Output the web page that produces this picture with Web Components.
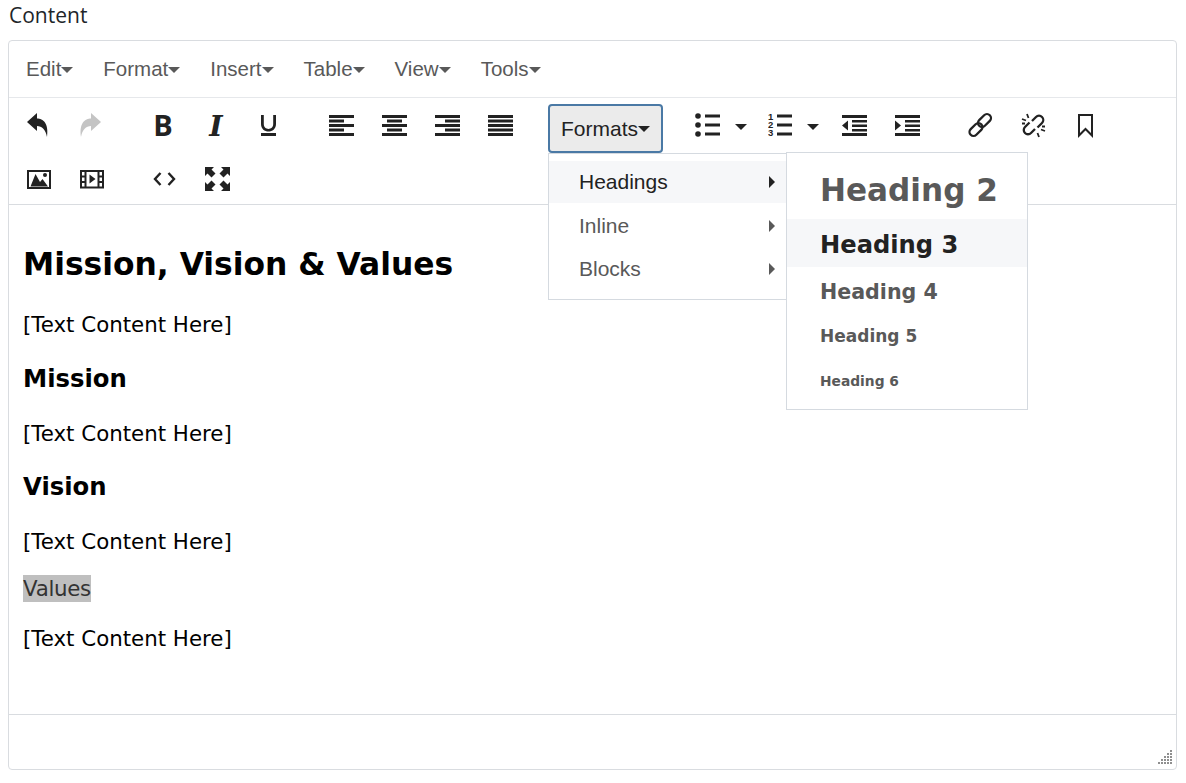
<!DOCTYPE html>
<html lang="en">
<head>
<meta charset="UTF-8">
<title>Content editor</title>
<style>
  body { margin: 0; padding: 0 9px 0 8px; background: #fff; font-family: "Open Sans", sans-serif; }
</style>
</head>
<body>

<field-label>Content</field-label>

<rich-editor>
  <editor-menubar slot="menubar">
    <menu-button>Edit</menu-button>
    <menu-button>Format</menu-button>
    <menu-button>Insert</menu-button>
    <menu-button>Table</menu-button>
    <menu-button>View</menu-button>
    <menu-button>Tools</menu-button>
  </editor-menubar>

  <editor-toolbar slot="toolbar">
    <tool-group gap="18">
      <tool-button icon="undo"></tool-button>
      <tool-button icon="redo" disabled></tool-button>
    </tool-group>
    <tool-group gap="19">
      <tool-button icon="bold"></tool-button>
      <tool-button icon="italic"></tool-button>
      <tool-button icon="underline"></tool-button>
    </tool-group>
    <tool-group gap="21">
      <tool-button icon="alignleft"></tool-button>
      <tool-button icon="aligncenter"></tool-button>
      <tool-button icon="alignright"></tool-button>
      <tool-button icon="alignjustify"></tool-button>
    </tool-group>
    <tool-group gap="18">
      <formats-menu></formats-menu>
    </tool-group>
    <tool-group gap="20">
      <tool-button icon="bullist" split="20" nudge="1"></tool-button>
      <tool-button icon="numlist" split="21" nudge="0"></tool-button>
      <tool-button icon="outdent"></tool-button>
      <tool-button icon="indent"></tool-button>
    </tool-group>
    <tool-group gap="20">
      <tool-button icon="link"></tool-button>
      <tool-button icon="unlink"></tool-button>
      <tool-button icon="bookmark"></tool-button>
    </tool-group>
    <tool-group gap="19">
      <tool-button icon="image"></tool-button>
      <tool-button icon="media"></tool-button>
    </tool-group>
    <tool-group gap="19">
      <tool-button icon="code"></tool-button>
      <tool-button icon="fullscreen"></tool-button>
    </tool-group>
  </editor-toolbar>

  <editor-content slot="content"></editor-content>
</rich-editor>

<script>
  // small helper, every element just sets its shadow html once
  class Base extends HTMLElement {
    render(html) {
      this.attachShadow({ mode: "open" });
      this.shadowRoot.innerHTML = html;
    }
  }

  // align icons are only horizontal bars: [left, width]
  function bars(list) {
    return "<path d=\"" + list.map((l, i) => `M${l[0]} ${2 + i * 4.5}h${l[1]}v3h-${l[1]}z`).join("") + "\"/>";
  }

  const LIST_LINES = '<path d="M10 1.500h15v3H10zM10 10.500h15v3H10zM10 19.500h15v3H10z"/>';

  const ICONS = {
    undo: '<path d="M0 9 10 0v5.500C16 5.500 22 10 20 24 18.500 16.500 15 13 10 13v5z"/>',
    redo: '<path d="M21 9 11 0v5.500C5 5.500-1 10 1 24 2.500 16.500 6 13 11 13v5z"/>',
    bold: '<text x="12" y="23" text-anchor="middle" font-family="Open Sans" font-weight="700" font-size="29">B</text>',
    italic: '<text x="12" y="23" text-anchor="middle" font-family="DejaVu Serif" font-style="italic" font-weight="700" font-size="28.500">I</text>',
    underline: '<path d="M4 2h2.800v9c0 6.500 9.400 6.500 9.400 0V2H19v9c0 10-15 10-15 0zM4 20h15v3H4z"/>',
    alignleft: bars([[0,25],[0,15],[0,25],[0,15],[0,25]]),
    aligncenter: bars([[0,25],[5,15],[0,25],[5,15],[0,25]]),
    alignright: bars([[0,25],[10,15],[0,25],[10,15],[0,25]]),
    alignjustify: bars([[0,25],[0,25],[0,25],[0,25],[0,25]]),
    bullist: '<circle cx="3" cy="3" r="2.800"/><circle cx="3" cy="12" r="2.800"/><circle cx="3" cy="21" r="2.800"/>' + LIST_LINES,
    // one wrapped text node, the digits sit closer than their line boxes
    numlist: '<foreignObject x="0" y="0" width="8" height="25"><div xmlns="http://www.w3.org/1999/xhtml" style="width:7px;font:700 9.5px/8px \'Liberation Sans\',sans-serif;color:#222;">1 2 3</div></foreignObject><path d="M9 1.500h15v3H9zM9 10.500h15v3H9zM9 19.500h15v3H9z"/>',
    outdent: '<path d="M0 2h25v3H0zM10 7h15v2.500H10zM10 11.500h15V14H10zM10 16h15v2.500H10zM0 20h25v3H0zM6 7.500v10l-6-5z"/>',
    indent: '<path d="M0 2h25v3H0zM10 7h15v2.500H10zM10 11.500h15V14H10zM10 16h15v2.500H10zM0 20h25v3H0zM0 7.500v10l6-5z"/>',
    link: '<g fill="none" stroke="#222" stroke-width="2.300"><rect x="12.500" y="0" width="8" height="15" rx="4" transform="rotate(45 16.500 7.500)"/><rect x="4" y="9" width="8" height="15" rx="4" transform="rotate(45 8 16.500)"/></g>',
    unlink: '<g fill="none" stroke="#222" stroke-width="2.300"><path d="M11 8l4-4a4.200 4.200 0 0 1 6 6l-4.500 4.500"/><path d="M14 16l-4 4a4.200 4.200 0 0 1-6-6l4.500-4.500"/></g><path stroke="#222" stroke-width="1.800" d="M1 6l4 1.500M6 1l1.500 4M24 18l-4-1.500M18 24l-1.500-4M1 10.500h3M21 13.500h3"/>',
    bookmark: '<path fill="none" stroke="#222" stroke-width="2" d="M5 2h13v20.500l-6.500-6.500L5 22.500z"/>',
    image: '<path fill-rule="evenodd" d="M0 3h24v19H0zM2 5v15h20V5z"/><circle cx="18" cy="8" r="2"/><path d="M3.500 19.500 8.500 7l4.500 8 2.500-3 5.500 7.500z"/>',
    media: '<path fill-rule="evenodd" d="M0 3h24v18.500H0zM6.500 5v14.500h11V5zM2 5v3.500h2.500V5zM2 10.500V14h2.500v-3.500zM2 16v3.500h2.500V16zM19.500 5v3.500H22V5zM19.500 10.500V14H22v-3.500zM19.500 16v3.500H22V16z"/><path d="M9.500 7.500v9l6-4.500z"/>',
    code: '<path fill="none" stroke="#222" stroke-width="2.400" d="M8.500 6 3 12l5.500 6M16.500 6 22 12l-5.500 6"/>',
    fullscreen: '<path d="M0 0h9L6.500 2.500 10.500 6.500 6.500 10.500 2.500 6.500 0 9zM25 0v9l-2.500-2.500-4 4-4-4 4-4L16 0zM0 24v-9l2.500 2.500 4-4 4 4-4 4L9 24zM25 24h-9l2.500-2.500-4-4 4-4 4 4L25 15z"/>'
  };

  class FieldLabel extends Base {
    constructor() {
      super();
      this.render(`<style>
        :host { display: block; height: 40px; padding: 1px 0 0 1px; box-sizing: border-box; color: #212529; font: 21px/28px "Open Sans", sans-serif; }
      </style><slot></slot>`);
    }
  }

  class RichEditor extends Base {
    constructor() {
      super();
      this.render(`<style>
        :host { display: flex; flex-direction: column; height: 730px; box-sizing: border-box; border: 1px solid #d9dce0; border-radius: 4px; position: relative; }
        .status { flex: none; height: 54px; border-top: 1px solid #d9dce0; position: relative; }
        .grip { position: absolute; right: 4px; bottom: 5px; width: 14px; height: 14px; }
      </style>
      <slot name="menubar"></slot>
      <slot name="toolbar"></slot>
      <slot name="content"></slot>
      <div class="status">
        <svg class="grip" viewBox="0 0 14 14" fill="#8f8f8f">
          <path d="M12 0h2v2h-2zM9 3h2v2H9zM12 3h2v2h-2zM6 6h2v2H6zM9 6h2v2H9zM12 6h2v2h-2zM3 9h2v2H3zM6 9h2v2H6zM9 9h2v2H9zM12 9h2v2h-2zM0 12h2v2H0zM3 12h2v2H3zM6 12h2v2H6zM9 12h2v2H9zM12 12h2v2h-2z"/>
        </svg>
      </div>`);
    }
  }

  class EditorMenubar extends Base {
    constructor() {
      super();
      this.render(`<style>
        :host { display: flex; flex: none; align-items: center; height: 56px; padding-left: 2px; border-bottom: 1px solid #e6e8eb; }
      </style><slot></slot>`);
    }
  }

  class MenuButton extends Base {
    constructor() {
      super();
      this.render(`<style>
        :host { display: flex; align-items: center; padding: 0 15px; color: #595959; font: 20.500px/28px "Liberation Sans", Arial, sans-serif; }
        i { margin-top: 1px; border: 6px solid transparent; border-top-color: #595959; border-bottom-width: 0; }
      </style><slot></slot><i></i>`);
    }
  }

  class EditorToolbar extends Base {
    constructor() {
      super();
      this.render(`<style>
        :host { display: flex; flex-wrap: wrap; flex: none; align-content: flex-start; height: 107px; padding: 0 3px 0 4px; border-bottom: 1px solid #d9dce0; box-sizing: border-box; }
      </style><slot></slot>`);
    }
  }

  class ToolGroup extends Base {
    constructor() {
      super();
      this.render(`<style>
        :host { display: flex; height: 54px; margin-right: ${this.getAttribute("gap")}px; }
      </style><slot></slot>`);
    }
  }

  class ToolButton extends Base {
    constructor() {
      super();
      const color = this.hasAttribute("disabled") ? "#c4c4c4" : "#222";
      const split = this.getAttribute("split");
      const nudge = this.getAttribute("nudge") || 0;
      this.render(`<style>
        :host { display: flex; align-items: center; height: 54px; color: ${color}; }
        .box { width: 53px; display: flex; justify-content: center; align-items: center; }
        svg { width: 25px; height: 24px; overflow: visible; fill: ${color}; }
        .caret { width: ${split}px; box-sizing: border-box; display: flex; padding: 3px 0 0 ${nudge}px; }
        .caret i { border: 6px solid transparent; border-top-color: #222; border-bottom-width: 0; }
      </style>
      <div class="box"><svg viewBox="0 0 25 24">${ICONS[this.getAttribute("icon")]}</svg></div>
      ${split ? '<div class="caret"><i></i></div>' : ""}`);
    }
  }

  class MenuRow extends Base {
    constructor() {
      super();
      this.render(`<style>
        :host { display: flex; align-items: center; justify-content: space-between; height: 43px; padding: 0 11px 0 30px; color: #595959; font: 21px/28px "Liberation Sans", Arial, sans-serif; }
        :host([active]) { height: 42px; background: #f6f7f9; color: #222; }
        i { border: 6px solid transparent; border-left-color: currentColor; border-right-width: 0; }
      </style><slot></slot><i></i>`);
    }
  }

  class HeadingRow extends Base {
    constructor() {
      super();
      const size = this.getAttribute("size");
      const tall = this.getAttribute("tall");
      const top = this.getAttribute("top") || 0;
      this.render(`<style>
        :host { display: flex; align-items: center; box-sizing: border-box; height: ${tall}px; padding: ${top}px 10px 0 33px; color: #595959; font: 700 ${size}px/1.2 "DejaVu Sans", sans-serif; white-space: nowrap; }
        :host([active]) { background: #f6f7f9; color: #222; }
      </style><slot></slot>`);
    }
  }

  class FormatsMenu extends Base {
    constructor() {
      super();
      this.render(`<style>
        :host { display: block; position: relative; width: 115px; height: 54px; }
        .btn { display: flex; align-items: center; justify-content: center; box-sizing: border-box; width: 115px; height: 49px; margin-top: 6px; background: #ebebeb; border: 2px solid #4a79a5; border-radius: 4px; color: #222; font: 21px/28px "Liberation Sans", Arial, sans-serif; }
        .btn i { margin-top: 1px; border: 6px solid transparent; border-top-color: #222; border-bottom-width: 0; }
        .menu { position: absolute; z-index: 5; left: 0; top: 55px; width: 239px; height: 147px; box-sizing: border-box; padding-top: 7px; background: #fff; border: 1px solid #d5dae0; }
        .menu menu-row:nth-child(2) { padding-top: 2px; box-sizing: border-box; height: 44px; }
        .sub { position: absolute; z-index: 6; left: 238px; top: 54px; width: 242px; height: 258px; box-sizing: border-box; background: #fff; border: 1px solid #d5dae0; }
      </style>
      <div class="btn">Formats<i></i></div>
      <div class="menu">
        <menu-row active>Headings</menu-row>
        <menu-row>Inline</menu-row>
        <menu-row>Blocks</menu-row>
      </div>
      <div class="sub">
        <heading-row size="31.100" tall="66" top="9">Heading 2</heading-row>
        <heading-row size="24.200" tall="48" top="5" active>Heading 3</heading-row>
        <heading-row size="20.600" tall="48" top="2">Heading 4</heading-row>
        <heading-row size="17" tall="42">Heading 5</heading-row>
        <heading-row size="13.800" tall="48">Heading 6</heading-row>
      </div>`);
    }
  }

  class EditorContent extends Base {
    constructor() {
      super();
      this.render(`<style>
        :host { display: block; flex: 1; padding: 14px 14px 0; overflow: hidden; color: #000; font: 21.330px/28px "DejaVu Sans", Verdana, sans-serif; }
        h1, h3, p { margin: 0; }
        h1 { font-size: 31.350px; line-height: 48px; margin: 21px 0 23px; }
        h3 { font-size: 24.300px; line-height: 32px; margin: 23.500px 0 25px; }
        .sel { display: inline-block; margin: 19px 0 23px; line-height: 27px; letter-spacing: -0.3px; background: #bfbfbf; color: #333; vertical-align: top; }
      </style>
      <h1>Mission, Vision &amp; Values</h1>
      <p>[Text Content Here]</p>
      <h3>Mission</h3>
      <p>[Text Content Here]</p>
      <h3>Vision</h3>
      <p>[Text Content Here]</p>
      <div><span class="sel">Values</span></div>
      <p>[Text Content Here]</p>`);
    }
  }

  customElements.define("field-label", FieldLabel);
  customElements.define("rich-editor", RichEditor);
  customElements.define("editor-menubar", EditorMenubar);
  customElements.define("menu-button", MenuButton);
  customElements.define("editor-toolbar", EditorToolbar);
  customElements.define("tool-group", ToolGroup);
  customElements.define("tool-button", ToolButton);
  customElements.define("menu-row", MenuRow);
  customElements.define("heading-row", HeadingRow);
  customElements.define("formats-menu", FormatsMenu);
  customElements.define("editor-content", EditorContent);
</script>

</body>
</html>
